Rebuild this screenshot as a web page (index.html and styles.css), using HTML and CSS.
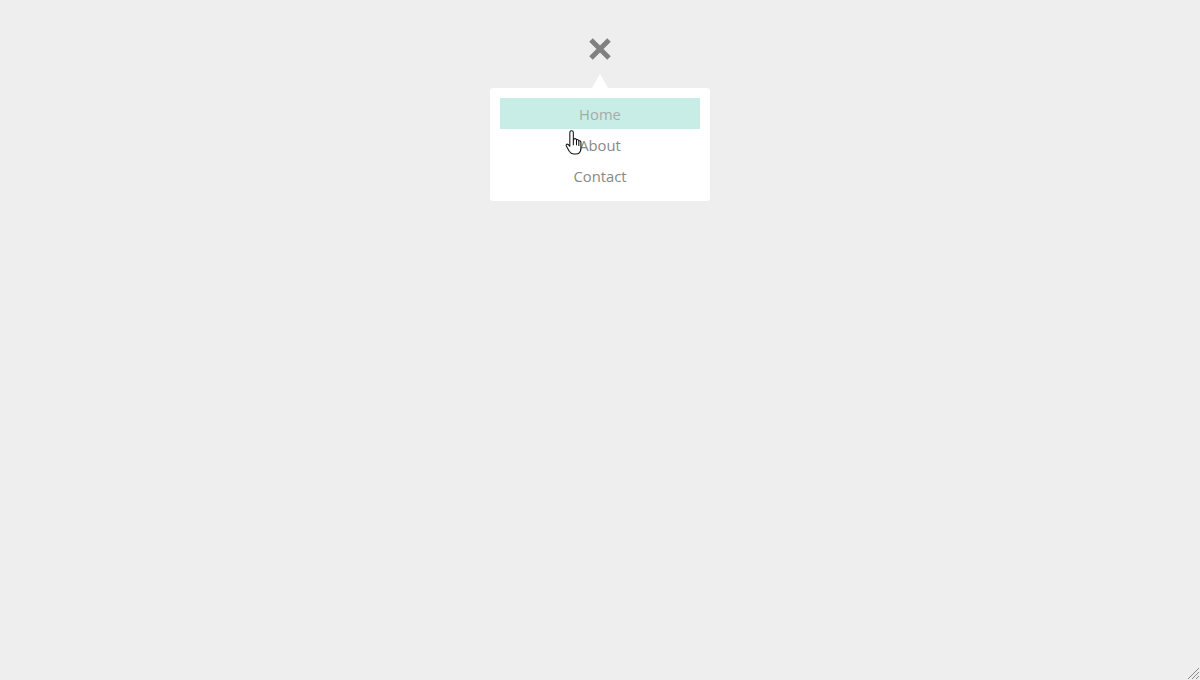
FILE: index.html
```html
<!DOCTYPE html>
<html>
<head>
<meta charset="utf-8">
<link rel="stylesheet" href="styles.css">
</head>
<body>
<div class="nav">
  <button class="toggle" aria-label="Close menu">
    <svg width="24" height="24" viewBox="0 0 24 24"><path d="M3 3 L21 21 M21 3 L3 21" stroke="#808080" stroke-width="5" stroke-linecap="butt"/></svg>
  </button>
  <div class="menu">
    <ul class="list">
      <li class="item active">Home</li>
      <li class="item">About</li>
      <li class="item">Contact</li>
    </ul>
    <svg class="cursor" width="19" height="28" viewBox="0 0 16 24"><path d="M5.5 1.5 C6.5 1.5 7 2 7 3 L7 10 L7.5 8.5 C8.5 8 9.5 8.3 9.7 9.3 C10.5 8.8 11.6 9.2 11.7 10.2 C12.5 9.9 13.5 10.3 13.5 11.5 L13.5 16 C13.5 19 12 21.5 9 21.5 L7.5 21.5 C5.5 21.5 4.5 20.5 3.5 19 L1 14.5 C0.6 13.6 1.2 12.8 2.1 13 C2.8 13.2 3.5 14 4 15 L4 3 C4 2 4.5 1.5 5.5 1.5 Z M7 9 L7 14 M9.7 9.3 L9.7 14 M11.7 10.2 L11.7 14.5" fill="#fff" stroke="#111" stroke-width="0.9"/></svg>
  </div>
</div>
<svg class="grip" width="14" height="14" viewBox="0 0 14 14"><path d="M13 2 L2 13 M13 6 L6 13 M13 10 L10 13" stroke="#888" stroke-width="1"/></svg>
</body>
</html>
```
FILE: styles.css
```css
html, body {
  margin: 0;
  height: 100%;
}
body {
  background: #eeeeee;
  font-family: "Open Sans", "Segoe UI", sans-serif;
  overflow: hidden;
}
.nav {
  display: flex;
  flex-direction: column;
  align-items: center;
  padding-top: 37px;
}
.toggle {
  background: none;
  border: 0;
  padding: 0;
  width: 24px;
  height: 24px;
  display: block;
}
.toggle svg {
  display: block;
}
.menu {
  position: relative;
  margin-top: 27px;
  width: 200px;
  padding: 10px;
  background: #fff;
  border-radius: 3px;
}
.menu::before {
  content: "";
  position: absolute;
  left: 50%;
  top: -14px;
  margin-left: -8px;
  border-left: 8px solid transparent;
  border-right: 8px solid transparent;
  border-bottom: 14px solid #fff;
}
.list {
  list-style: none;
  margin: 0;
  padding: 0;
}
.item {
  height: 29px;
  padding-top: 2px;
  line-height: 29px;
  text-align: center;
  font-size: 14.8px;
  color: #888;
}
.item.active {
  background: #c7ede6;
  color: #aaa;
}
.cursor {
  position: absolute;
  left: 75px;
  top: 41px;
}
.grip {
  position: absolute;
  right: 0;
  bottom: 0;
}
```
